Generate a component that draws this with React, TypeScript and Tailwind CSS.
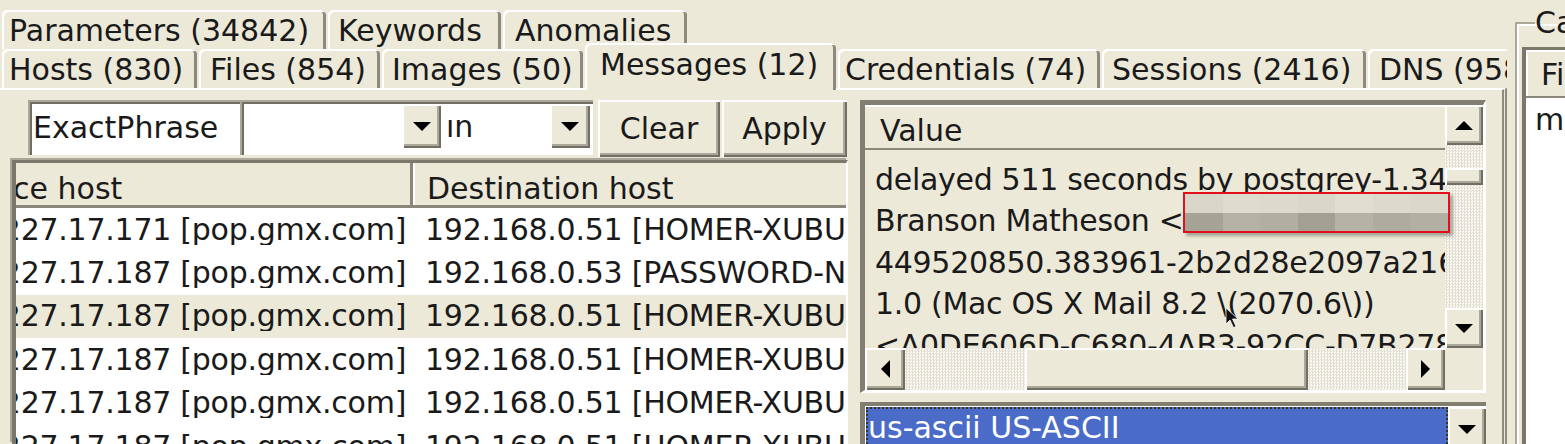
const raised =
  "shadow-[inset_2px_2px_0_#ffffff,inset_-2px_-2px_0_#716f64,inset_-4px_-4px_0_#aca899]"
const checker =
  "bg-[#f4f2ea] bg-[image:repeating-conic-gradient(#e2dfd0_0_25%,#fbfaf6_0_50%)] bg-[length:3px_3px]"

const topTabs = [
  { label: "Parameters (34842)", cls: "w-[324px] pl-[7px]" },
  { label: "Keywords", cls: "w-[173px] pl-[10px]" },
  { label: "Anomalies", cls: "w-[184px] pl-[12px]" },
]

const tabs = [
  { label: "Hosts (830)", cls: "w-[195px] pl-[7px]" },
  { label: "Files (854)", cls: "w-[181px] pl-[11px]" },
  { label: "Images (50)", cls: "w-[201px] pl-[10px]" },
  { label: "Messages (12)", cls: "w-[251px] pl-[15px]", active: true },
  { label: "Credentials (74)", cls: "w-[262px] pl-[7px]" },
  { label: "Sessions (2416)", cls: "w-[264px] pl-[10px]" },
  { label: "DNS (958)", cls: "w-[160px] pl-[11px]" },
]

const messages = [
  ["212.227.17.171 [pop.gmx.com]", "192.168.0.51 [HOMER-XUBUNTU]"],
  ["212.227.17.187 [pop.gmx.com]", "192.168.0.53 [PASSWORD-NINJA]"],
  ["212.227.17.187 [pop.gmx.com]", "192.168.0.51 [HOMER-XUBUNTU]"],
  ["212.227.17.187 [pop.gmx.com]", "192.168.0.51 [HOMER-XUBUNTU]"],
  ["212.227.17.187 [pop.gmx.com]", "192.168.0.51 [HOMER-XUBUNTU]"],
  ["212.227.17.187 [pop.gmx.com]", "192.168.0.51 [HOMER-XUBUNTU]"],
]

const values = [
  "delayed 511 seconds by postgrey-1.34 at mail",
  "Branson Matheson <",
  "449520850.383961-2b2d28e2097a2164",
  "1.0 (Mac OS X Mail 8.2 \\(2070.6\\))",
  "<A0DE606D-C680-4AB3-92CC-D7B27811>",
]

// pixelated blur behind the red box
const blurTop = ["bg-[#d8d6c8]", "bg-[#dedccf]", "bg-[#dcdacc]", "bg-[#d9d7c9]", "bg-[#e0ded1]", "bg-[#dcdacc]", "bg-[#dad8ca]"]
const blurBottom = ["bg-[#a5a396]", "bg-[#b4b2a5]", "bg-[#b1afa2]", "bg-[#a2a093]", "bg-[#b5b3a6]", "bg-[#aeac9f]", "bg-[#b2b0a3]"]

function Tri({ dir }: { dir: "up" | "down" | "left" | "right" }) {
  if (dir === "up")
    return (
      <svg width="18" height="9" viewBox="0 0 18 9">
        <polygon points="9,0 18,9 0,9" fill="#000" />
      </svg>
    )
  if (dir === "down")
    return (
      <svg width="18" height="9" viewBox="0 0 18 9">
        <polygon points="0,0 18,0 9,9" fill="#000" />
      </svg>
    )
  if (dir === "left")
    return (
      <svg width="9" height="18" viewBox="0 0 9 18">
        <polygon points="9,0 9,18 0,9" fill="#000" />
      </svg>
    )
  return (
    <svg width="9" height="18" viewBox="0 0 9 18">
      <polygon points="0,0 9,9 0,18" fill="#000" />
    </svg>
  )
}

export default function App() {
  return (
    <div className="relative flex w-[1565px] h-[444px] overflow-hidden bg-[#ece9d8] text-[#1a1a1a] font-['DejaVu_Sans',sans-serif] text-[30px] leading-[30px]">
      {/* tab control */}
      <div className="w-[1507px] shrink-0 overflow-hidden">
        <div className="flex h-[48px] pt-[10px] pl-[2px] gap-[2px]">
          {topTabs.map((t) => (
            <div
              key={t.label}
              className={`${t.cls} shrink-0 h-[39px] pt-[6px] rounded-t-[5px] whitespace-nowrap shadow-[inset_2px_2px_0_#ffffff,inset_-3px_0_0_#8d8a7d]`}
            >
              {t.label}
            </div>
          ))}
        </div>
        <div className="flex h-[40px] pl-[2px] gap-[2px] items-start">
          {tabs.map((t) =>
            t.active ? (
              <div
                key={t.label}
                className={`${t.cls} relative z-10 shrink-0 -mt-[5px] h-[47px] pt-[7px] bg-[#ece9d8] rounded-t-[5px] whitespace-nowrap shadow-[inset_2px_2px_0_#ffffff,inset_-3px_0_0_#8d8a7d]`}
              >
                {t.label}
              </div>
            ) : (
              <div
                key={t.label}
                className={`${t.cls} shrink-0 mt-[1px] h-[39px] pt-[6px] bg-[#ece9d8] rounded-t-[5px] whitespace-nowrap shadow-[inset_2px_2px_0_#ffffff,inset_-3px_0_0_#8d8a7d]`}
              >
                {t.label}
              </div>
            )
          )}
        </div>

        {/* tab page */}
        <div className="h-[356px] w-[1507px] border-t-2 border-t-white border-r-[5px] border-double border-r-[#8e8b7e] flex pl-[12px] pt-[10px]">
          {/* left: filter + list */}
          <div className="w-[836px] shrink-0 flex flex-col">
            <div className="flex h-[57px] ml-[16px]">
              <div className="w-[212px] h-[55px] bg-white flex items-center pl-[5px] shadow-[inset_2px_2px_0_#aca899,inset_4px_4px_0_#716f64,inset_-2px_-2px_0_#ffffff]">
                ExactPhrase
              </div>
              <div className="w-[203px] h-[55px] bg-white flex justify-end pt-[4px] pr-[2px] shadow-[inset_2px_2px_0_#aca899,inset_4px_4px_0_#716f64,inset_-2px_-2px_0_#ffffff]">
                <div className={`w-[39px] h-[44px] bg-[#ece9d8] flex items-center justify-center ${raised}`}>
                  <Tri dir="down" />
                </div>
              </div>
              <div className="w-[150px] h-[55px] bg-white flex items-start pt-[4px] pr-[3px] shadow-[inset_0_2px_0_#aca899,inset_0_4px_0_#716f64,inset_-2px_-2px_0_#ffffff]">
                <div className="flex-1 pl-[3px] pt-[8px] overflow-hidden whitespace-nowrap">ın</div>
                <div className={`w-[40px] h-[44px] bg-[#ece9d8] flex items-center justify-center ${raised}`}>
                  <Tri dir="down" />
                </div>
              </div>
              <div className={`ml-[5px] w-[122px] h-[57px] flex items-center justify-center ${raised}`}>Clear</div>
              <div className={`ml-[2px] w-[125px] h-[57px] flex items-center justify-center ${raised}`}>Apply</div>
            </div>

            <div className="mt-[3px] h-[300px] bg-white overflow-hidden border-l-[4px] border-t-[3px] border-l-[#7a776b] border-t-[#7a776b] border-r-2 border-r-white shadow-[-2px_-2px_0_#aca899]">
              <div className="-ml-[87px] w-[1120px]">
                <div className="flex h-[45px] bg-[#ece9d8] border-b-[3px] border-b-[#8b887b]">
                  <div className="w-[484px] shrink-0 pl-[16px] pt-[11px] border-r-[3px] border-r-[#8b887b] whitespace-nowrap">
                    Source host
                  </div>
                  <div className="flex-1 pl-[14px] pt-[11px] whitespace-nowrap shadow-[inset_2px_0_0_#ffffff]">
                    Destination host
                  </div>
                </div>
                {messages.map((m, i) => (
                  <div
                    key={i}
                    className={`flex h-[43.4px] items-center whitespace-nowrap tracking-[-0.25px] ${i === 2 ? "bg-[#ece9d8]" : "bg-white"}`}
                  >
                    <div className="w-[484px] shrink-0 pl-[7px] overflow-hidden">{m[0]}</div>
                    <div className="flex-1 pl-[12px]">{m[1]}</div>
                  </div>
                ))}
              </div>
            </div>
          </div>

          {/* right: attribute values */}
          <div className="ml-[10px] w-[632px] shrink-0 flex flex-col">
            <div className="ml-[2px] w-[626px] h-[293px] flex flex-col border-t-[5px] border-l-[5px] border-t-[#827f72] border-l-[#827f72] border-r-[3px] border-b-[3px] border-r-white border-b-white">
              <div className="flex h-[243px]">
                <div className="w-[580px] flex flex-col overflow-hidden">
                  <div className="h-[45px] shrink-0 pl-[15px] pt-[11px] border-b-2 border-b-[#8b887b] shadow-[inset_0_2px_0_#ffffff]">
                    Value
                  </div>
                  <div className="pt-[9px] overflow-hidden">
                    {values.map((v, i) => (
                      <div key={i} className="h-[41.5px] flex items-center pl-[10px] whitespace-nowrap tracking-[-0.3px]">
                        {v}
                      </div>
                    ))}
                  </div>
                </div>
                <div className="w-[38px] flex flex-col">
                  <div className={`h-[40px] flex items-center justify-center ${raised}`}>
                    <Tri dir="up" />
                  </div>
                  <div className={`h-[23px] ${checker}`} />
                  <div className={`h-[17px] bg-[#ece9d8] ${raised}`} />
                  <div className={`flex-1 ${checker}`} />
                  <div className={`h-[40px] flex items-center justify-center ${raised}`}>
                    <Tri dir="down" />
                  </div>
                </div>
              </div>
              <div className="flex h-[42px]">
                <div className={`w-[40px] flex items-center justify-center ${raised}`}>
                  <Tri dir="left" />
                </div>
                <div className={`w-[120px] ${checker}`} />
                <div className={`w-[283px] bg-[#ece9d8] ${raised}`} />
                <div className={`flex-1 ${checker}`} />
                <div className={`w-[39px] flex items-center justify-center ${raised}`}>
                  <Tri dir="right" />
                </div>
                <div className="w-[38px]" />
              </div>
            </div>

            <div className="mt-[9px] ml-[2px] w-[626px] h-[50px] flex border-t-[4px] border-l-[5px] border-t-[#827f72] border-l-[#827f72] bg-white">
              <div className="flex-1 ml-[1px] mt-[1px] bg-[#4a6bc8] border-2 border-dotted border-[#3b3320] text-white pt-[4px] whitespace-nowrap">
                us-ascii US-ASCII
              </div>
              <div className={`w-[38px] h-[44px] mt-[1px] bg-[#ece9d8] flex items-center justify-center ${raised}`}>
                <Tri dir="down" />
              </div>
            </div>
          </div>
        </div>
      </div>

      {/* right group box */}
      <div className="flex-1 overflow-hidden">
        <fieldset className="ml-[8px] mt-[8px] p-0 w-[120px] h-[480px] border-2 border-[#aca899] shadow-[inset_2px_2px_0_#ffffff]">
          <legend className="ml-[18px] p-0 leading-[30px] whitespace-nowrap">Captured</legend>
          <div className="ml-[5px] mt-[9px] h-[420px] bg-white border-l-[4px] border-t-[3px] border-l-[#7a776b] border-t-[#7a776b]">
            <div className="h-[48px] bg-[#ece9d8] pl-[15px] pt-[10px] border-b-2 border-b-[#8b887b] shadow-[inset_2px_2px_0_#ffffff] whitespace-nowrap">
              File
            </div>
            <div className="pl-[9px] pt-[7px] whitespace-nowrap">mx.gmx</div>
          </div>
        </fieldset>
      </div>

      {/* redaction box */}
      <div className="absolute left-[1183px] top-[192px] w-[267px] h-[41px] border-2 border-[#e3101c] flex flex-col shadow-[3px_3px_3px_rgba(0,0,0,0.3)]">
        <div className="flex h-1/2">
          {blurTop.map((c, i) => (
            <div key={i} className={`flex-1 ${c}`} />
          ))}
        </div>
        <div className="flex h-1/2">
          {blurBottom.map((c, i) => (
            <div key={i} className={`flex-1 ${c}`} />
          ))}
        </div>
      </div>

      {/* mouse pointer */}
      <svg className="absolute left-[1225px] top-[307px]" width="20" height="22" viewBox="0 0 20 22">
        <path d="M1 1 L1 17 L5 13 L8.5 20.5 L11 19.5 L7.5 12 L13 12 Z" fill="#111" stroke="#f4f4f4" strokeWidth="0.8" />
      </svg>
    </div>
  )
}
